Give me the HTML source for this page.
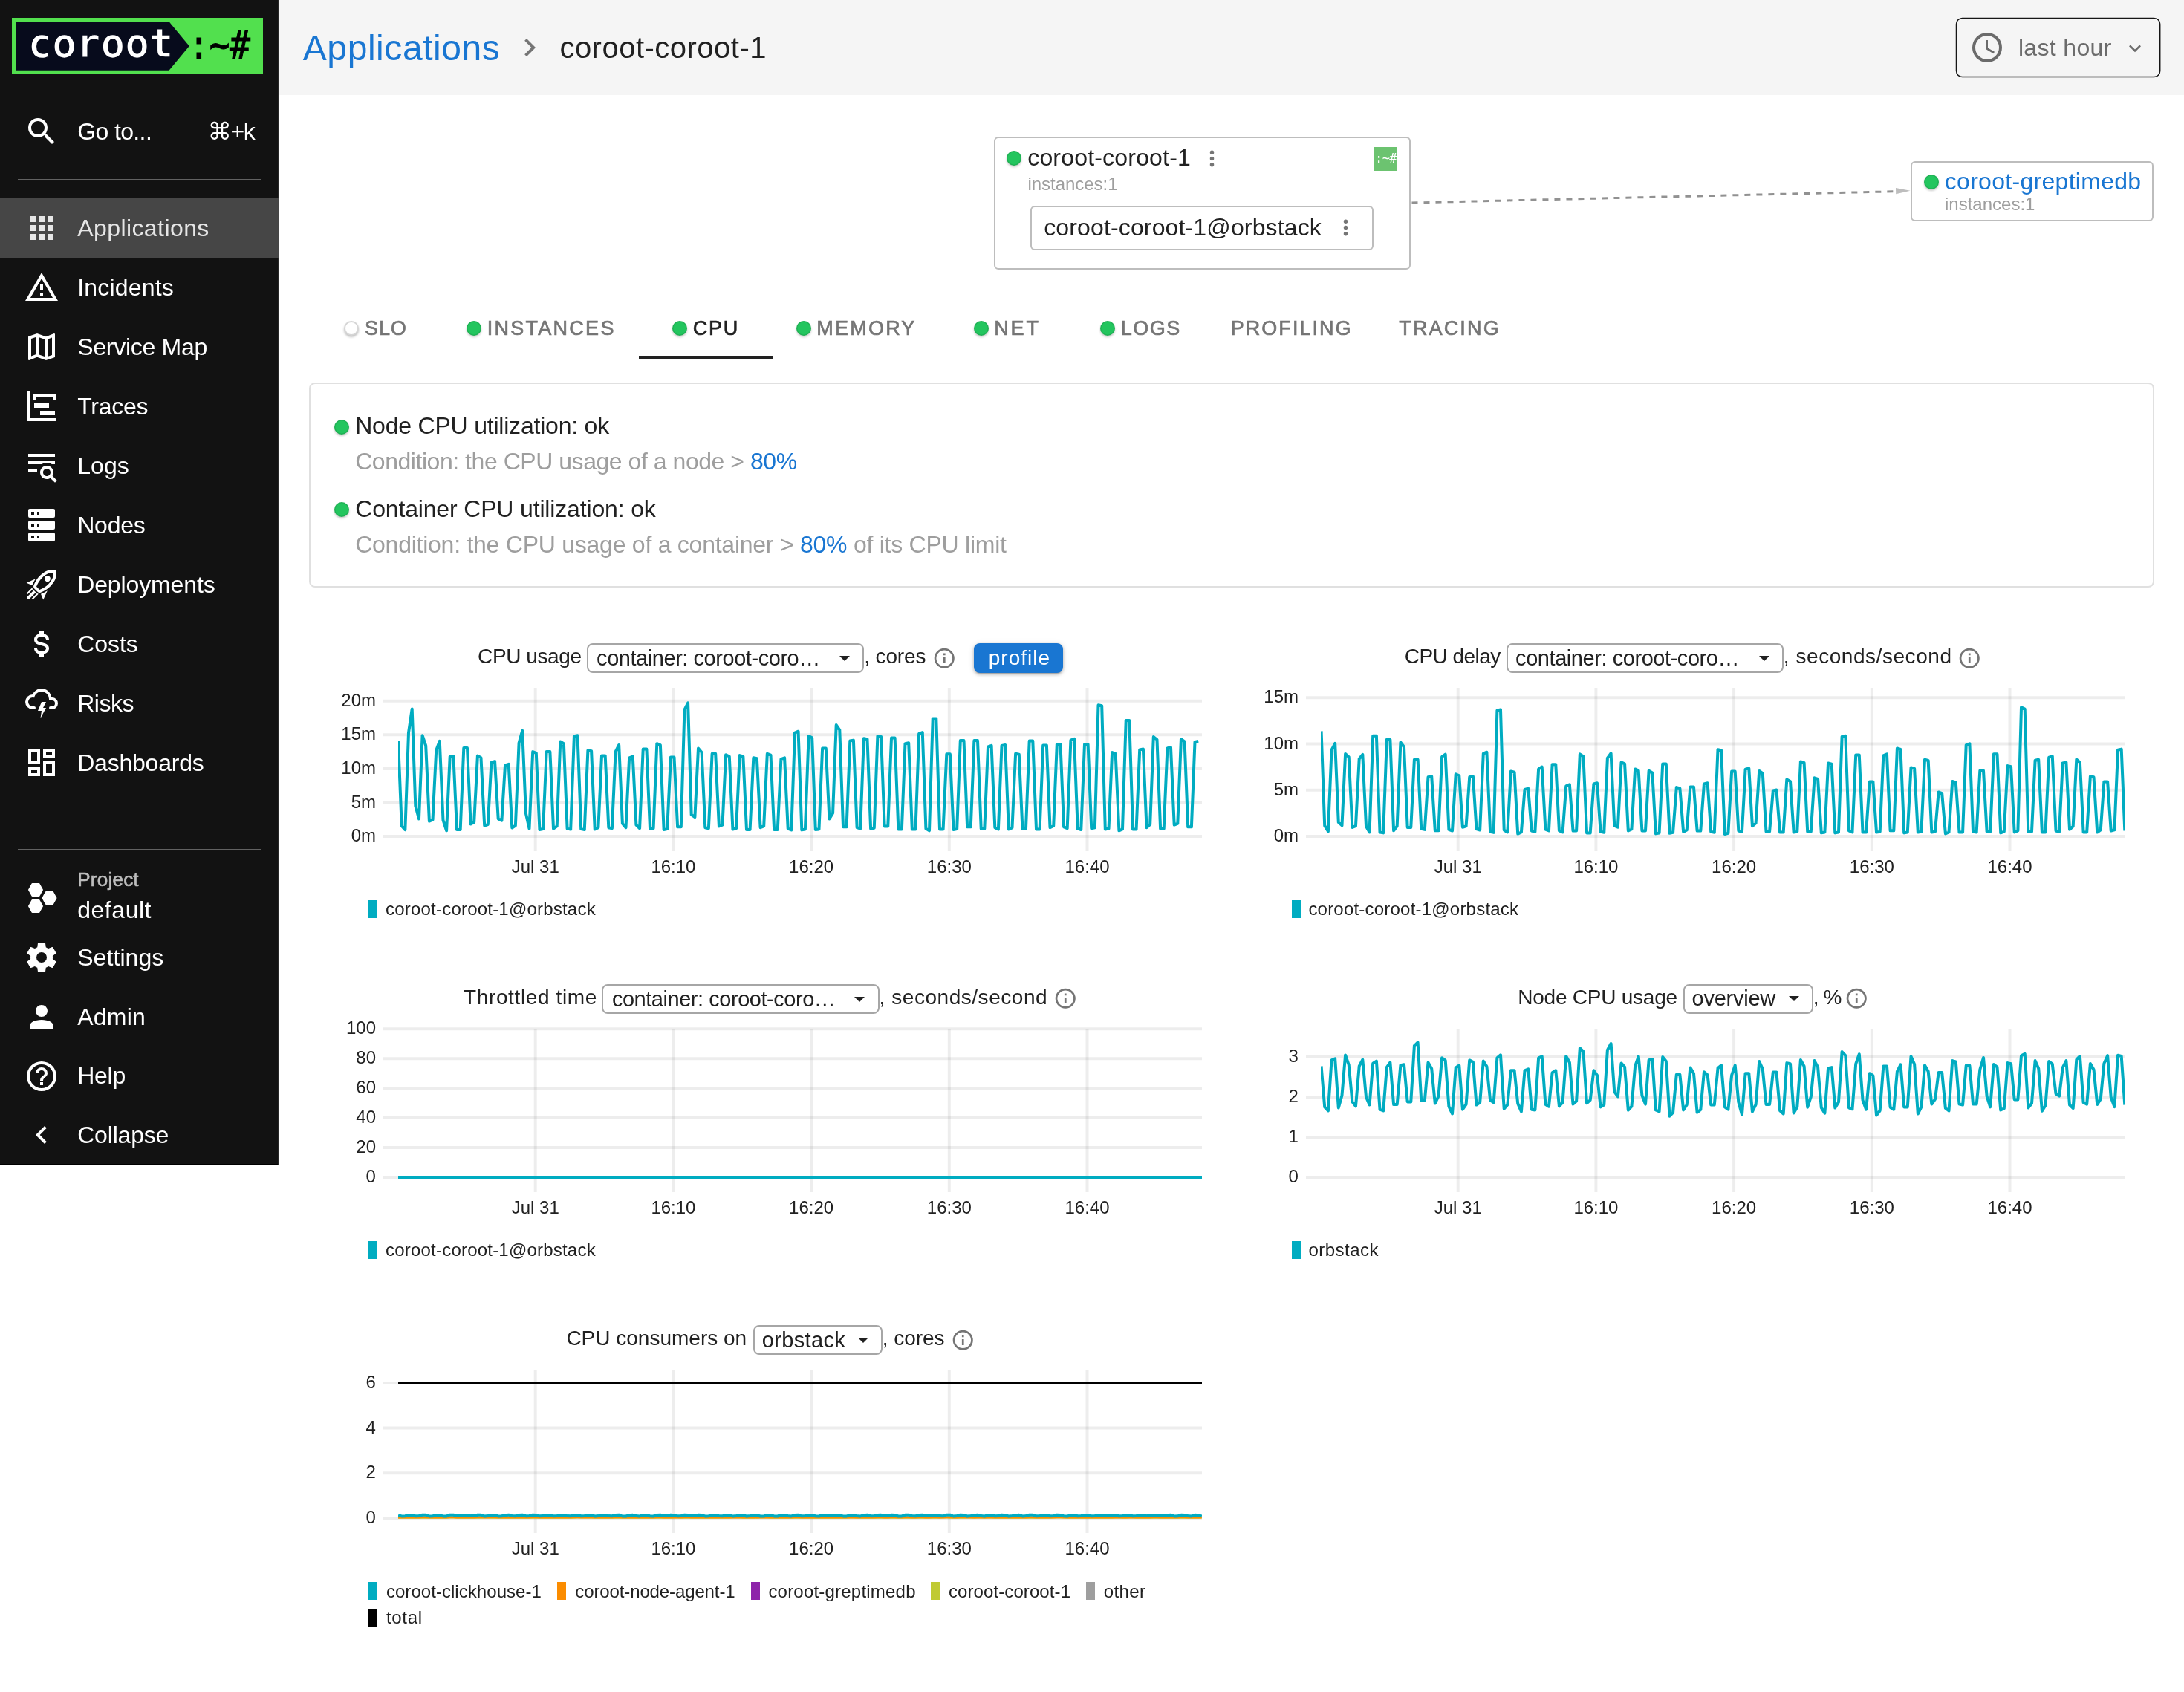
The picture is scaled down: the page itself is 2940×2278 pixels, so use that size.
<!DOCTYPE html>
<html lang="en"><head><meta charset="utf-8"><title>coroot-coroot-1 - CPU</title>
<style>
html,body{margin:0;padding:0}
@media (max-width:1600px){html{zoom:.5}}
body{width:2940px;height:2278px;position:relative;overflow:hidden;background:#fff;font-family:'Liberation Sans','DejaVu Sans',sans-serif;-webkit-font-smoothing:antialiased}
#app{position:absolute;left:0;top:0;width:2940px;height:2278px;will-change:transform}
.t{position:absolute;white-space:pre;line-height:1.2;display:block}
.t a{color:#1976d2}
.ic{position:absolute;display:block}
.plot{position:absolute;display:block;overflow:visible}
nav{position:absolute;left:0;top:0;width:376px;height:1569px;background:#121212;box-sizing:border-box;box-shadow:inset -2px 0 0 #272727,inset 0 -2px 0 #000}
nav .hr{position:absolute;left:24px;width:328px;height:2px;background:rgba(255,255,255,.34)}
nav .active{position:absolute;left:0;top:267px;width:376px;height:80px;background:#464646}
figure{margin:0}
header{position:absolute;left:376px;top:0;width:2564px;height:128px;background:#f5f5f5}
.box{position:absolute;border:2px solid #bdbdbd;border-radius:6px;background:#fff;box-sizing:border-box}
.dot{position:absolute;width:20px;height:20px;border-radius:50%;background:#23c55e;box-shadow:0 2px 3px rgba(0,0,0,.22),inset 0 0 0 1.5px rgba(0,0,0,.1)}
.dot.none{background:#fff;box-shadow:0 2px 3px rgba(0,0,0,.25);border:2px solid #d6d6d6;box-sizing:border-box}
.badge{position:absolute;left:1849px;top:198px;width:32px;height:32px;background:#6cc370}
.tabline{position:absolute;left:860px;top:479px;width:180px;height:4px;background:#212121}
.card{position:absolute;left:416px;top:515px;width:2483.5px;height:276px;border:2px solid #e0e0e0;border-radius:8px;box-sizing:border-box}
.sel{position:absolute;border:2px solid #a6a6a6;border-radius:8px;box-sizing:border-box;background:#fff}
.btn{position:absolute;border-radius:8px;background:#1976d2;box-shadow:0 3px 2px -2px rgba(0,0,0,.2),0 2px 4px 0 rgba(0,0,0,.24),0 1px 8px 0 rgba(0,0,0,.12)}
.lm{position:absolute;width:12px;height:24px;display:block}
</style></head>
<body>
<div id="app">
<nav>
<svg class="ic" style="left:16px;top:24px" width="338" height="76" viewBox="0 0 338 76"><rect width="338" height="76" fill="#52e04e"/><path d="M5,5.3H211.6L238.8,38L211.6,70.7H5Z" fill="#070b1c"/><text x="21.5" y="53.2" font-family="'DejaVu Sans Mono','Liberation Mono',monospace" font-weight="700" font-size="54.5" fill="#fff" stroke="#070b1c" stroke-width="1.6" textLength="196" lengthAdjust="spacingAndGlyphs">coroot</text><text x="238" y="54.5" font-family="'DejaVu Sans Mono','Liberation Mono',monospace" font-size="54" fill="#000" stroke="#000" stroke-width="1.1" textLength="83" lengthAdjust="spacingAndGlyphs">:~#</text></svg>
<div><svg class="ic" style="left:32.0px;top:153.0px" width="48" height="48" viewBox="0 0 24 24" ><path fill="#ffffff" d="M9.5,3A6.5,6.5 0 0,1 16,9.5C16,11.11 15.41,12.59 14.44,13.73L14.71,14H15.5L20.5,19L19,20.5L14,15.5V14.71L13.73,14.44C12.59,15.41 11.11,16 9.5,16A6.5,6.5 0 0,1 3,9.5A6.5,6.5 0 0,1 9.5,3M9.5,5C7,5 5,7 5,9.5C5,12 7,14 9.5,14C12,14 14,12 14,9.5C14,7 12,5 9.5,5Z"/></svg><span class="t" style="left:104.2px;top:157.8px;font-size:32px;color:#ffffff;letter-spacing:-0.62px">Go to...</span><span class="t" style="left:279.8px;top:157.8px;font-size:32px;color:#ffffff;letter-spacing:-1.34px">⌘+k</span></div>
<div class="hr" style="top:241px"></div>
<div class="active"></div>
<a class="cur"><svg class="ic" style="left:32.0px;top:283.0px" width="48" height="48" viewBox="0 0 24 24" ><path fill="#e6e6e6" d="M16,20H20V16H16M16,14H20V10H16M10,8H14V4H10M16,8H20V4H16M10,14H14V10H10M4,14H8V10H4M4,20H8V16H4M10,20H14V16H10M4,8H8V4H4V8Z"/></svg><span class="t" style="left:104.2px;top:287.8px;font-size:32px;color:#e6e6e6;letter-spacing:0.42px">Applications</span></a>
<a><svg class="ic" style="left:32.0px;top:363.0px" width="48" height="48" viewBox="0 0 24 24" ><path fill="#ffffff" d="M12,2L1,21H23M12,6L19.53,19H4.47M11,10V14H13V10M11,16V18H13V16"/></svg><span class="t" style="left:104.2px;top:367.8px;font-size:32px;color:#ffffff;letter-spacing:0.19px">Incidents</span></a>
<a><svg class="ic" style="left:32.0px;top:443.0px" width="48" height="48" viewBox="0 0 24 24" ><path fill="#ffffff" d="M20.5,3L20.34,3.03L15,5.1L9,3L3.36,4.9C3.15,4.97 3,5.15 3,5.38V20.5A0.5,0.5 0 0,0 3.5,21L3.66,20.97L9,18.9L15,21L20.64,19.1C20.85,19.03 21,18.85 21,18.62V3.5A0.5,0.5 0 0,0 20.5,3M10,5.47L14,6.87V18.53L10,17.13V5.47M5,6.46L8,5.45V17.15L5,18.31V6.46M19,17.54L16,18.55V6.86L19,5.7V17.54Z"/></svg><span class="t" style="left:104.2px;top:447.8px;font-size:32px;color:#ffffff;letter-spacing:-0.27px">Service Map</span></a>
<a><svg class="ic" style="left:32.0px;top:523.0px" width="48" height="48" viewBox="0 0 24 24" ><path fill="#ffffff" d="M2,2H4V20H22V22H2V2M7,10H17V13H7V10M11,15H21V18H11V15M6,4H22V8H20V6H8V8H6V4Z"/></svg><span class="t" style="left:104.2px;top:527.8px;font-size:32px;color:#ffffff;letter-spacing:-0.28px">Traces</span></a>
<a><svg class="ic" style="left:32.0px;top:603.0px" width="48" height="48" viewBox="0 0 24 24" ><path fill="#ffffff" d="M19.31 18.9L22.39 22L21 23.39L17.88 20.32C17.19 20.75 16.37 21 15.5 21C13 21 11 19 11 16.5C11 14 13 12 15.5 12C18 12 20 14 20 16.5C20 17.38 19.75 18.21 19.31 18.9M15.5 19C16.88 19 18 17.88 18 16.5C18 15.12 16.88 14 15.5 14C14.12 14 13 15.12 13 16.5C13 17.88 14.12 19 15.5 19M21 4V6H3V4H21M3 16V14H9V16H3M3 11V9H21V11H18.97C17.96 10.37 16.77 10 15.5 10C14.23 10 13.04 10.37 12.03 11H3Z"/></svg><span class="t" style="left:104.2px;top:607.8px;font-size:32px;color:#ffffff;letter-spacing:0.07px">Logs</span></a>
<a><svg class="ic" style="left:32.0px;top:683.0px" width="48" height="48" viewBox="0 0 24 24" ><path fill="#ffffff" d="M4,1H20A1,1 0 0,1 21,2V6A1,1 0 0,1 20,7H4A1,1 0 0,1 3,6V2A1,1 0 0,1 4,1M4,9H20A1,1 0 0,1 21,10V14A1,1 0 0,1 20,15H4A1,1 0 0,1 3,14V10A1,1 0 0,1 4,9M4,17H20A1,1 0 0,1 21,18V22A1,1 0 0,1 20,23H4A1,1 0 0,1 3,22V18A1,1 0 0,1 4,17M9,5H10V3H9V5M9,13H10V11H9V13M9,21H10V19H9V21M5,3V5H7V3H5M5,11V13H7V11H5M5,19V21H7V19H5Z"/></svg><span class="t" style="left:104.2px;top:687.8px;font-size:32px;color:#ffffff;letter-spacing:-0.23px">Nodes</span></a>
<a><svg class="ic" style="left:32.0px;top:763.0px" width="48" height="48" viewBox="0 0 24 24" ><path fill="#ffffff" d="M13.13 22.19L11.5 18.36C13.07 17.78 14.54 17 15.9 16.09L13.13 22.19M5.64 12.5L1.81 10.87L7.91 8.1C7 9.46 6.22 10.93 5.64 12.5M19.22 4C19.5 4 19.75 4 19.96 4.05C20.13 5.44 19.94 8.3 16.66 11.58C14.96 13.29 12.93 14.6 10.65 15.47L8.5 13.37C9.42 11.06 10.73 9.03 12.42 7.34C15.18 4.58 17.64 4 19.22 4M19.22 2C17.24 2 14.24 2.69 11 5.93C8.81 8.12 7.5 10.53 6.65 12.64C6.37 13.39 6.56 14.21 7.11 14.77L9.24 16.89C9.62 17.27 10.13 17.5 10.66 17.5C10.89 17.5 11.13 17.44 11.36 17.35C13.5 16.53 15.88 15.19 18.07 13C23.73 7.34 21.61 2.39 21.61 2.39S20.7 2 19.22 2M14.54 9.46C13.76 8.68 13.76 7.41 14.54 6.63S16.59 5.85 17.37 6.63C18.14 7.41 18.15 8.68 17.37 9.46C16.59 10.24 15.32 10.24 14.54 9.46M8.88 16.53L7.47 15.12L8.88 16.53M6.24 22L9.88 18.36C9.54 18.27 9.21 18.12 8.91 17.91L4.83 22H6.24M2 22H3.41L8.18 17.24L6.76 15.83L2 20.59V22M2 19.17L6.09 15.09C5.88 14.79 5.73 14.47 5.64 14.12L2 17.76V19.17Z"/></svg><span class="t" style="left:104.2px;top:767.8px;font-size:32px;color:#ffffff;letter-spacing:-0.12px">Deployments</span></a>
<a><svg class="ic" style="left:32.0px;top:843.0px" width="48" height="48" viewBox="0 0 24 24" ><path fill="#ffffff" d="M7,15H9C9,16.08 10.37,17 12,17C13.63,17 15,16.08 15,15C15,13.9 13.96,13.5 11.76,12.97C9.64,12.44 7,11.78 7,9C7,7.21 8.47,5.69 10.5,5.18V3H13.5V5.18C15.53,5.69 17,7.21 17,9H15C15,7.92 13.63,7 12,7C10.37,7 9,7.92 9,9C9,10.1 10.04,10.5 12.24,11.03C14.36,11.56 17,12.22 17,15C17,16.79 15.53,18.31 13.5,18.82V21H10.5V18.82C8.47,18.31 7,16.79 7,15Z"/></svg><span class="t" style="left:104.2px;top:847.8px;font-size:32px;color:#ffffff;letter-spacing:-0.05px">Costs</span></a>
<a><svg class="ic" style="left:32.0px;top:923.0px" width="48" height="48" viewBox="0 0 24 24" ><path fill="#ffffff" d="M6,16A5,5 0 0,1 1,11A5,5 0 0,1 6,6C7,3.65 9.3,2 12,2C15.43,2 18.24,4.66 18.5,8.03L19,8A4,4 0 0,1 23,12A4,4 0 0,1 19,16H18A1,1 0 0,1 17,15A1,1 0 0,1 18,14H19A2,2 0 0,0 21,12A2,2 0 0,0 19,10H17V9A5,5 0 0,0 12,4C9.5,4 7.45,5.82 7.06,8.19C6.73,8.07 6.37,8 6,8A3,3 0 0,0 3,11A3,3 0 0,0 6,14H7A1,1 0 0,1 8,15A1,1 0 0,1 7,16H6M12,11H15L13,15H15L11.25,22L12,17H9.5L12,11Z"/></svg><span class="t" style="left:104.2px;top:927.8px;font-size:32px;color:#ffffff;letter-spacing:-0.45px">Risks</span></a>
<a><svg class="ic" style="left:32.0px;top:1003.0px" width="48" height="48" viewBox="0 0 24 24" ><path fill="#ffffff" d="M19,5V7H15V5H19M9,5V11H5V5H9M19,13V19H15V13H19M9,17V19H5V17H9M21,3H13V9H21V3M11,3H3V13H11V3M21,11H13V21H21V11M11,15H3V21H11V15Z"/></svg><span class="t" style="left:104.2px;top:1007.8px;font-size:32px;color:#ffffff;letter-spacing:-0.22px">Dashboards</span></a>
<div class="hr" style="top:1143px"></div>
<a><svg class="ic" style="left:32.0px;top:1184.7px" width="48" height="48" viewBox="0 0 24 24" ><path fill="#ffffff" d="M10.25,2C10.44,2 10.61,2.11 10.69,2.26L12.91,6.22L13,6.5L12.91,6.78L10.69,10.74C10.61,10.89 10.44,11 10.25,11H5.75C5.56,11 5.39,10.89 5.31,10.74L3.09,6.78L3,6.5L3.09,6.22L5.31,2.26C5.39,2.11 5.56,2 5.75,2H10.25M10.25,13C10.44,13 10.61,13.11 10.69,13.26L12.91,17.22L13,17.5L12.91,17.78L10.69,21.74C10.61,21.89 10.44,22 10.25,22H5.75C5.56,22 5.39,21.89 5.31,21.74L3.09,17.78L3,17.5L3.09,17.22L5.31,13.26C5.39,13.11 5.56,13 5.75,13H10.25M19.5,7.5C19.69,7.5 19.86,7.61 19.94,7.76L22.16,11.72L22.25,12L22.16,12.28L19.94,16.24C19.86,16.39 19.69,16.5 19.5,16.5H15C14.81,16.5 14.64,16.39 14.56,16.24L12.34,12.28L12.25,12L12.34,11.72L14.56,7.76C14.64,7.61 14.81,7.5 15,7.5H19.5Z"/></svg><span class="t" style="left:104.3px;top:1169.4px;font-size:26px;color:#bdbdbd;letter-spacing:0.23px;-webkit-text-stroke:0.6px currentColor">Project</span><span class="t" style="left:104.2px;top:1206.3px;font-size:32px;color:#ffffff;letter-spacing:0.54px">default</span></a>
<a><svg class="ic" style="left:32.0px;top:1265.0px" width="48" height="48" viewBox="0 0 24 24" ><path fill="#ffffff" d="M12,15.5A3.5,3.5 0 0,1 8.5,12A3.5,3.5 0 0,1 12,8.5A3.5,3.5 0 0,1 15.5,12A3.5,3.5 0 0,1 12,15.5M19.43,12.97C19.47,12.65 19.5,12.33 19.5,12C19.5,11.67 19.47,11.34 19.43,11L21.54,9.37C21.73,9.22 21.78,8.95 21.66,8.73L19.66,5.27C19.54,5.05 19.27,4.96 19.05,5.05L16.56,6.05C16.04,5.66 15.5,5.32 14.87,5.07L14.5,2.42C14.46,2.18 14.25,2 14,2H10C9.75,2 9.54,2.18 9.5,2.42L9.13,5.07C8.5,5.32 7.96,5.66 7.44,6.05L4.95,5.05C4.73,4.96 4.46,5.05 4.34,5.27L2.34,8.73C2.21,8.95 2.27,9.22 2.46,9.37L4.57,11C4.53,11.34 4.5,11.67 4.5,12C4.5,12.33 4.53,12.65 4.57,12.97L2.46,14.63C2.27,14.78 2.21,15.05 2.34,15.27L4.34,18.73C4.46,18.95 4.73,19.03 4.95,18.95L7.44,17.94C7.96,18.34 8.5,18.68 9.13,18.93L9.5,21.58C9.54,21.82 9.75,22 10,22H14C14.25,22 14.46,21.82 14.5,21.58L14.87,18.93C15.5,18.67 16.04,18.34 16.56,17.94L19.05,18.95C19.27,19.03 19.54,18.95 19.66,18.73L21.66,15.27C21.78,15.05 21.73,14.78 21.54,14.63L19.43,12.97Z"/></svg><span class="t" style="left:104.2px;top:1269.8px;font-size:32px;color:#ffffff;letter-spacing:0.07px">Settings</span></a>
<a><svg class="ic" style="left:32.0px;top:1345.0px" width="48" height="48" viewBox="0 0 24 24" ><path fill="#ffffff" d="M12,4A4,4 0 0,1 16,8A4,4 0 0,1 12,12A4,4 0 0,1 8,8A4,4 0 0,1 12,4M12,14C16.42,14 20,15.79 20,18V20H4V18C4,15.79 7.58,14 12,14Z"/></svg><span class="t" style="left:104.2px;top:1349.8px;font-size:32px;color:#ffffff;letter-spacing:0.22px">Admin</span></a>
<a><svg class="ic" style="left:32.0px;top:1424.6px" width="48" height="48" viewBox="0 0 24 24" ><path fill="#ffffff" d="M11,18H13V16H11V18M12,2A10,10 0 0,0 2,12A10,10 0 0,0 12,22A10,10 0 0,0 22,12A10,10 0 0,0 12,2M12,20C7.59,20 4,16.41 4,12C4,7.59 7.59,4 12,4C16.41,4 20,7.59 20,12C20,16.41 16.41,20 12,20M12,6A4,4 0 0,0 8,10H10A2,2 0 0,1 12,8A2,2 0 0,1 14,10C14,12 11,11.75 11,15H13C13,12.75 16,12.5 16,10A4,4 0 0,0 12,6Z"/></svg><span class="t" style="left:104.2px;top:1429.4px;font-size:32px;color:#ffffff;letter-spacing:-0.27px">Help</span></a>
<a><svg class="ic" style="left:32.0px;top:1504.0px" width="48" height="48" viewBox="0 0 24 24" ><path fill="#ffffff" d="M15.41,16.58L10.83,12L15.41,7.41L14,6L8,12L14,18L15.41,16.58Z"/></svg><span class="t" style="left:104.2px;top:1508.8px;font-size:32px;color:#ffffff;letter-spacing:-0.19px">Collapse</span></a>
</nav>
<header></header>
<div class="crumbs">
<span class="t" style="left:407.8px;top:35.7px;font-size:48px;color:#1976d2;letter-spacing:0.56px">Applications</span><svg class="ic" style="left:689.0px;top:40.0px" width="48" height="48" viewBox="0 0 24 24" ><path fill="#757575" d="M8.59,16.58L13.17,12L8.59,7.41L10,6L16,12L10,18L8.59,16.58Z"/></svg><span class="t" style="left:753.4px;top:40.0px;font-size:40px;color:#212121;letter-spacing:0.49px">coroot-coroot-1</span>
</div>
<div class="range">
<svg class="ic" style="left:2630px;top:20px" width="282" height="88" viewBox="2630 20 282 88"><rect x="2633.5" y="24.4" width="274.2" height="79.2" rx="8" fill="none" stroke="#161616" stroke-width="1.5"/></svg>
<svg class="ic" style="left:2650.8px;top:40.0px" width="48" height="48" viewBox="0 0 24 24" ><path fill="#6b6b6b" d="M12,20A8,8 0 0,0 20,12A8,8 0 0,0 12,4A8,8 0 0,0 4,12A8,8 0 0,0 12,20M12,2A10,10 0 0,1 22,12A10,10 0 0,1 12,22C6.47,22 2,17.5 2,12A10,10 0 0,1 12,2M12.5,7V12.25L17,14.92L16.25,16.15L11,13V7H12.5Z"/></svg><span class="t" style="left:2716.9px;top:44.8px;font-size:32px;color:#6b6b6b;letter-spacing:0.35px">last hour</span><svg class="ic" style="left:2858.0px;top:48.5px" width="32" height="32" viewBox="0 0 24 24" ><path fill="#6b6b6b" d="M7.41,8.58L12,13.17L16.59,8.58L18,10L12,16L6,10L7.41,8.58Z"/></svg>
</div>
<main>
<section class="appmap">
<div class="box" style="left:1337.5px;top:184.4px;width:561.7px;height:178.2px"></div>
<div class="box" style="left:1387px;top:277px;width:462px;height:60px"></div>
<div class="box" style="left:2572px;top:217px;width:327.4px;height:81px"></div>
<div class="badge"></div>
<i class="dot" style="left:1354.6px;top:203px"></i>
<i class="dot" style="left:2590px;top:234.8px"></i>
<svg class="ic" style="left:1890px;top:240px" width="700" height="50" viewBox="1890 240 700 50"><line x1="1900.5" y1="273" x2="2570" y2="257.3" stroke="#919191" stroke-width="3" stroke-dasharray="8 8"/><path d="M2571.5,256.8L2552,253L2552.2,261.2Z" fill="#bdbdbd"/></svg>
<svg class="ic" style="left:1615.4px;top:197.3px" width="33" height="33" viewBox="0 0 24 24" ><path fill="#757575" d="M12,16A2,2 0 0,1 14,18A2,2 0 0,1 12,20A2,2 0 0,1 10,18A2,2 0 0,1 12,16M12,10A2,2 0 0,1 14,12A2,2 0 0,1 12,14A2,2 0 0,1 10,12A2,2 0 0,1 12,10M12,4A2,2 0 0,1 14,6A2,2 0 0,1 12,8A2,2 0 0,1 10,6A2,2 0 0,1 12,4Z"/></svg><svg class="ic" style="left:1794.6px;top:290.2px" width="33" height="33" viewBox="0 0 24 24" ><path fill="#757575" d="M12,16A2,2 0 0,1 14,18A2,2 0 0,1 12,20A2,2 0 0,1 10,18A2,2 0 0,1 12,16M12,10A2,2 0 0,1 14,12A2,2 0 0,1 12,14A2,2 0 0,1 10,12A2,2 0 0,1 12,10M12,4A2,2 0 0,1 14,6A2,2 0 0,1 12,8A2,2 0 0,1 10,6A2,2 0 0,1 12,4Z"/></svg>
<span class="t" style="left:1383.2px;top:193.3px;font-size:32px;color:#212121;letter-spacing:0.19px">coroot-coroot-1</span>
<span class="t" style="left:1383.4px;top:233.6px;font-size:24px;color:#9e9e9e;letter-spacing:-0.02px">instances:1</span>
<span class="t" style="left:1405.2px;top:286.8px;font-size:32px;color:#212121;letter-spacing:0.14px">coroot-coroot-1@orbstack</span>
<span class="t" style="left:2617.8px;top:224.8px;font-size:32px;color:#1976d2;letter-spacing:0.29px">coroot-greptimedb</span>
<span class="t" style="left:2618.0px;top:260.6px;font-size:24px;color:#9e9e9e">instances:1</span>
<span class="t" style="left:1851.1px;top:203.3px;font-size:17px;color:#ffffff;letter-spacing:-0.68px;font-family:'DejaVu Sans Mono','Liberation Mono',monospace">:~#</span>
</section>
<section class="tabs">
<a><i class="dot none" style="left:462.7px;top:432px"></i><span class="t" style="left:491.1px;top:426.0px;font-size:27px;color:#757575;letter-spacing:0.86px;-webkit-text-stroke:0.7px currentColor">SLO</span></a>
<a><i class="dot" style="left:627.9px;top:432px"></i><span class="t" style="left:655.8px;top:426.0px;font-size:27px;color:#757575;letter-spacing:2.26px;-webkit-text-stroke:0.7px currentColor">INSTANCES</span></a>
<a class="cur"><i class="dot" style="left:904.9px;top:432px"></i><span class="t" style="left:932.8px;top:426.0px;font-size:27px;color:#212121;letter-spacing:1.67px;-webkit-text-stroke:0.7px currentColor">CPU</span></a>
<a><i class="dot" style="left:1071.6px;top:432px"></i><span class="t" style="left:1099.3px;top:426.0px;font-size:27px;color:#757575;letter-spacing:2.21px;-webkit-text-stroke:0.7px currentColor">MEMORY</span></a>
<a><i class="dot" style="left:1311.0px;top:432px"></i><span class="t" style="left:1338.3px;top:426.0px;font-size:27px;color:#757575;letter-spacing:2.82px;-webkit-text-stroke:0.7px currentColor">NET</span></a>
<a><i class="dot" style="left:1480.7px;top:432px"></i><span class="t" style="left:1508.8px;top:426.0px;font-size:27px;color:#757575;letter-spacing:1.47px;-webkit-text-stroke:0.7px currentColor">LOGS</span></a>
<a><span class="t" style="left:1656.7px;top:426.0px;font-size:27px;color:#757575;letter-spacing:2.05px;-webkit-text-stroke:0.7px currentColor">PROFILING</span></a>
<a><span class="t" style="left:1883.3px;top:426.0px;font-size:27px;color:#757575;letter-spacing:2.14px;-webkit-text-stroke:0.7px currentColor">TRACING</span></a>
<div class="tabline"></div>
</section>
<section class="checks">
<div class="card"></div>
<i class="dot" style="left:450px;top:564.5px"></i>
<span class="t" style="left:478.2px;top:553.8px;font-size:32px;color:#212121;letter-spacing:-0.21px">Node CPU utilization: ok</span>
<span class="t" style="left:478.2px;top:601.8px;font-size:32px;color:#9e9e9e;letter-spacing:-0.46px">Condition: the CPU usage of a node &gt; <a>80%</a></span>
<i class="dot" style="left:450px;top:676.4px"></i>
<span class="t" style="left:478.2px;top:665.8px;font-size:32px;color:#212121;letter-spacing:-0.16px">Container CPU utilization: ok</span>
<span class="t" style="left:478.2px;top:713.5px;font-size:32px;color:#9e9e9e;letter-spacing:-0.25px">Condition: the CPU usage of a container &gt; <a>80%</a> of its CPU limit</span>
</section>
<section class="charts">
<figure>
<svg class="plot" style="left:516px;top:922px" width="1102" height="230" viewBox="0 0 1102 230"><g stroke="#000" stroke-opacity=".07" stroke-width="4"><line x1="0" x2="1102" y1="204.1" y2="204.1"/><line x1="0" x2="1102" y1="158.5" y2="158.5"/><line x1="0" x2="1102" y1="112.9" y2="112.9"/><line x1="0" x2="1102" y1="67.3" y2="67.3"/><line x1="0" x2="1102" y1="21.7" y2="21.7"/><line x1="204.7" x2="204.7" y1="4" y2="224"/><line x1="390.4" x2="390.4" y1="4" y2="224"/><line x1="576.1" x2="576.1" y1="4" y2="224"/><line x1="761.8" x2="761.8" y1="4" y2="224"/><line x1="947.5" x2="947.5" y1="4" y2="224"/></g><svg x="20" y="0" width="1082" height="230" viewBox="536 922 1082 230"><polyline points="536.1,997.9 540.7,1112.0 545.4,1117.2 550.0,986.6 554.7,954.6 559.3,1085.1 564.0,1102.4 568.6,990.2 573.2,1003.9 577.9,1105.6 582.5,1103.7 587.2,1010.3 591.8,997.9 596.5,1104.2 601.1,1118.3 605.7,1018.5 610.4,1018.5 615.0,1117.0 619.7,1117.0 624.3,1007.1 629.0,1007.1 633.6,1109.4 638.2,1106.9 642.9,1017.6 647.5,1020.3 652.2,1111.5 656.8,1110.0 661.4,1026.7 666.1,1025.1 670.7,1102.4 675.4,1104.6 680.0,1030.3 684.7,1028.9 689.3,1114.5 693.9,1111.5 698.6,1000.2 703.2,983.8 707.9,1095.1 712.5,1115.6 717.2,1012.1 721.8,1013.9 726.4,1117.0 731.1,1116.1 735.7,1012.1 740.4,1012.1 745.0,1115.6 749.7,1112.4 754.3,998.4 758.9,1001.2 763.6,1115.6 768.2,1116.5 772.9,991.1 777.5,990.2 782.2,1116.1 786.8,1117.0 791.4,1010.3 796.1,1011.2 800.7,1116.5 805.4,1114.2 810.0,1017.6 814.7,1017.6 819.3,1114.2 823.9,1115.2 828.6,1012.1 833.2,1003.0 837.9,1108.8 842.5,1114.2 847.1,1020.3 851.8,1018.5 856.4,1110.6 861.1,1115.2 865.7,1008.5 870.4,1008.5 875.0,1116.1 879.6,1115.2 884.3,1001.2 888.9,1003.0 893.6,1117.0 898.2,1116.1 902.9,1019.4 907.5,1019.4 912.1,1113.3 916.8,1113.3 921.4,955.6 926.1,946.4 930.7,1096.9 935.4,1100.1 940.0,1007.5 944.6,1013.0 949.3,1114.2 953.9,1115.2 958.6,1014.8 963.2,1014.8 967.9,1112.4 972.5,1110.6 977.1,1016.2 981.8,1018.5 986.4,1116.5 991.1,1115.2 995.7,1017.1 1000.4,1018.5 1005.0,1117.0 1009.6,1117.0 1014.3,1020.3 1018.9,1021.2 1023.6,1114.2 1028.2,1112.4 1032.8,1014.8 1037.5,1016.7 1042.1,1117.0 1046.8,1117.0 1051.4,1022.1 1056.1,1020.3 1060.7,1115.6 1065.3,1117.4 1070.0,986.6 1074.6,984.7 1079.3,1117.4 1083.9,1116.5 1088.6,991.1 1093.2,993.4 1097.8,1117.0 1102.5,1116.5 1107.1,1007.5 1111.8,1007.5 1116.4,1102.4 1121.1,1094.6 1125.7,976.1 1130.3,982.9 1135.0,1113.3 1139.6,1113.3 1144.3,997.5 1148.9,996.6 1153.6,1114.2 1158.2,1115.6 1162.8,994.3 1167.5,995.2 1172.1,1115.6 1176.8,1114.7 1181.4,991.1 1186.1,992.0 1190.7,1112.4 1195.3,1112.4 1200.0,993.4 1204.6,993.4 1209.3,1116.5 1213.9,1116.5 1218.5,1001.2 1223.2,1000.2 1227.8,1116.5 1232.5,1116.5 1237.1,987.9 1241.8,986.1 1246.4,1115.6 1251.0,1118.3 1255.7,967.4 1260.3,967.4 1265.0,1116.5 1269.6,1116.5 1274.3,1015.3 1278.9,1015.3 1283.5,1117.0 1288.2,1116.1 1292.8,997.1 1297.5,997.1 1302.1,1113.3 1306.8,1113.3 1311.4,997.1 1316.0,997.1 1320.7,1115.6 1325.3,1115.6 1330.0,1005.3 1334.6,1003.9 1339.3,1114.2 1343.9,1116.5 1348.5,1003.9 1353.2,1003.0 1357.8,1116.5 1362.5,1114.5 1367.1,1014.8 1371.8,1015.7 1376.4,1115.6 1381.0,1115.6 1385.7,997.5 1390.3,997.5 1395.0,1116.5 1399.6,1116.5 1404.2,1003.4 1408.9,1003.4 1413.5,1114.2 1418.2,1112.0 1422.8,1002.1 1427.5,1002.1 1432.1,1113.3 1436.7,1115.2 1441.4,996.6 1446.0,994.8 1450.7,1115.6 1455.3,1117.0 1460.0,1002.1 1464.6,1002.1 1469.2,1115.2 1473.9,1114.2 1478.5,949.2 1483.2,950.1 1487.8,1116.5 1492.5,1115.6 1497.1,1013.0 1501.7,1014.8 1506.4,1118.3 1511.0,1116.5 1515.7,970.1 1520.3,970.1 1525.0,1116.5 1529.6,1116.5 1534.2,1009.4 1538.9,1008.5 1543.5,1114.2 1548.2,1110.1 1552.8,992.0 1557.5,995.7 1562.1,1115.6 1566.7,1115.6 1571.4,1007.5 1576.0,1006.2 1580.7,1110.6 1585.3,1108.8 1589.9,995.2 1594.6,998.4 1599.2,1113.3 1603.9,1113.3 1608.5,998.9 1613.2,997.9" fill="none" stroke="#00acc1" stroke-width="4" stroke-linejoin="round"/></svg></svg>
<div class="sel" style="left:789.8px;top:866.0px;width:373.5px;height:40.4px"></div>
<svg class="ic" style="left:1129.5px;top:882.7px" width="14" height="7" viewBox="0 0 14 7"><path d="M0,0H14L7,7Z" fill="#212121"/></svg>
<svg class="ic" style="left:1254.8px;top:869.5px" width="32.5" height="32.5" viewBox="0 0 24 24" ><path fill="#757575" d="M11,9H13V7H11M12,20C7.59,20 4,16.41 4,12C4,7.59 7.59,4 12,4C16.41,4 20,7.59 20,12C20,16.41 16.41,20 12,20M12,2A10,10 0 0,0 2,12A10,10 0 0,0 12,22A10,10 0 0,0 22,12A10,10 0 0,0 12,2M11,17H13V11H11V17Z"/></svg>
<div class="btn" style="left:1311.0px;top:866.0px;width:119.8px;height:40.2px"></div>
<i class="lm" style="left:496.0px;top:1211.6px;background:#00acc1"></i>
<span class="t" style="left:472.7px;top:1111.2px;font-size:24px;color:#212121">0m</span>
<span class="t" style="left:472.7px;top:1065.6px;font-size:24px;color:#212121">5m</span>
<span class="t" style="left:459.3px;top:1020.0px;font-size:24px;color:#212121">10m</span>
<span class="t" style="left:459.3px;top:974.4px;font-size:24px;color:#212121">15m</span>
<span class="t" style="left:459.3px;top:928.8px;font-size:24px;color:#212121">20m</span>
<span class="t" style="left:688.7px;top:1153.1px;font-size:24px;color:#212121">Jul 31</span>
<span class="t" style="left:876.4px;top:1153.1px;font-size:24px;color:#212121">16:10</span>
<span class="t" style="left:1062.1px;top:1153.1px;font-size:24px;color:#212121">16:20</span>
<span class="t" style="left:1247.8px;top:1153.1px;font-size:24px;color:#212121">16:30</span>
<span class="t" style="left:1433.5px;top:1153.1px;font-size:24px;color:#212121">16:40</span>
<span class="t" style="left:643.1px;top:867.2px;font-size:28px;color:#212121;letter-spacing:-0.41px">CPU usage</span>
<span class="t" style="left:803.1px;top:868.8px;font-size:29px;color:#212121;letter-spacing:-0.45px">container: coroot-coro…</span>
<span class="t" style="left:1163.3px;top:867.2px;font-size:28px;color:#212121;letter-spacing:-0.14px">, cores</span>
<span class="t" style="left:1330.8px;top:869.3px;font-size:28px;color:#fff;letter-spacing:0.99px">profile</span>
<span class="t" style="left:519.0px;top:1210.2px;font-size:24px;color:#212121;letter-spacing:0.21px">coroot-coroot-1@orbstack</span>
</figure>
<figure>
<svg class="plot" style="left:1758px;top:922px" width="1102" height="230" viewBox="0 0 1102 230"><g stroke="#000" stroke-opacity=".07" stroke-width="4"><line x1="0" x2="1102" y1="204.0" y2="204.0"/><line x1="0" x2="1102" y1="141.8" y2="141.8"/><line x1="0" x2="1102" y1="79.5" y2="79.5"/><line x1="0" x2="1102" y1="17.2" y2="17.2"/><line x1="204.7" x2="204.7" y1="4" y2="224"/><line x1="390.4" x2="390.4" y1="4" y2="224"/><line x1="576.1" x2="576.1" y1="4" y2="224"/><line x1="761.8" x2="761.8" y1="4" y2="224"/><line x1="947.5" x2="947.5" y1="4" y2="224"/></g><svg x="20" y="0" width="1082" height="230" viewBox="1778 922 1082 230"><polyline points="1778.6,984.4 1783.2,1111.6 1787.9,1119.3 1792.5,1009.8 1797.2,1000.9 1801.8,1107.1 1806.5,1111.3 1811.1,1014.9 1815.7,1019.2 1820.4,1114.0 1825.0,1112.2 1829.7,1021.7 1834.3,1015.9 1839.0,1112.4 1843.6,1120.5 1848.2,990.7 1852.9,990.7 1857.5,1120.5 1862.2,1121.4 1866.8,995.8 1871.4,995.8 1876.1,1118.3 1880.7,1112.2 1885.4,999.6 1890.0,1005.4 1894.7,1114.0 1899.3,1114.0 1903.9,1022.7 1908.6,1022.7 1913.2,1115.7 1917.9,1116.9 1922.5,1046.3 1927.2,1045.2 1931.8,1118.3 1936.4,1118.3 1941.1,1018.8 1945.7,1015.6 1950.4,1116.9 1955.0,1118.5 1959.7,1042.2 1964.3,1044.3 1968.9,1113.7 1973.6,1112.4 1978.2,1046.3 1982.9,1045.2 1987.5,1116.0 1992.2,1117.5 1996.8,1014.6 2001.4,1012.7 2006.1,1119.9 2010.7,1120.9 2015.4,956.4 2020.0,955.4 2024.7,1117.5 2029.3,1120.5 2033.9,1038.4 2038.6,1039.6 2043.2,1122.6 2047.9,1120.5 2052.5,1062.9 2057.2,1061.6 2061.8,1118.5 2066.4,1119.9 2071.1,1035.4 2075.7,1032.5 2080.4,1116.7 2085.0,1118.5 2089.6,1029.3 2094.3,1029.3 2098.9,1118.5 2103.6,1120.5 2108.2,1058.4 2112.9,1056.3 2117.5,1118.5 2122.1,1118.5 2126.8,1015.3 2131.4,1018.4 2136.1,1121.5 2140.7,1121.5 2145.4,1055.5 2150.0,1054.2 2154.6,1119.9 2159.3,1120.8 2163.9,1020.7 2168.6,1014.3 2173.2,1111.6 2177.9,1113.7 2182.5,1026.4 2187.1,1028.4 2191.8,1118.5 2196.4,1116.4 2201.1,1035.4 2205.7,1037.6 2210.4,1118.5 2215.0,1118.5 2219.6,1037.6 2224.3,1040.5 2228.9,1122.4 2233.6,1121.5 2238.2,1028.4 2242.8,1028.4 2247.5,1121.8 2252.1,1120.8 2256.8,1060.1 2261.4,1061.4 2266.1,1119.9 2270.7,1117.5 2275.3,1059.4 2280.0,1059.4 2284.6,1118.5 2289.3,1118.5 2293.9,1055.5 2298.6,1054.2 2303.2,1119.9 2307.8,1120.8 2312.5,1009.2 2317.1,1010.2 2321.8,1123.0 2326.4,1121.8 2331.1,1038.6 2335.7,1038.6 2340.3,1118.5 2345.0,1119.7 2349.6,1035.6 2354.3,1034.5 2358.9,1112.2 2363.6,1108.3 2368.2,1038.0 2372.8,1041.2 2377.5,1119.7 2382.1,1119.7 2386.8,1064.5 2391.4,1063.5 2396.1,1120.5 2400.7,1120.5 2405.3,1049.4 2410.0,1052.0 2414.6,1120.5 2419.3,1119.7 2423.9,1025.4 2428.6,1026.8 2433.2,1119.7 2437.8,1119.7 2442.5,1047.3 2447.1,1048.8 2451.8,1121.4 2456.4,1120.5 2461.0,1027.5 2465.7,1028.8 2470.3,1121.4 2475.0,1120.5 2479.6,991.7 2484.3,990.7 2488.9,1118.5 2493.5,1120.5 2498.2,1016.6 2502.8,1016.6 2507.5,1120.5 2512.1,1120.5 2516.8,1052.4 2521.4,1052.4 2526.0,1120.5 2530.7,1119.7 2535.3,1017.4 2540.0,1015.3 2544.6,1118.3 2549.3,1118.3 2553.9,1007.5 2558.5,1008.8 2563.2,1121.4 2567.8,1120.5 2572.5,1033.5 2577.1,1034.7 2581.8,1120.5 2586.4,1119.7 2591.0,1022.7 2595.7,1023.9 2600.3,1120.5 2605.0,1119.7 2609.6,1066.5 2614.2,1068.2 2618.9,1122.4 2623.5,1120.5 2628.2,1052.0 2632.8,1053.3 2637.5,1120.5 2642.1,1120.5 2646.7,1003.1 2651.4,1001.3 2656.0,1119.7 2660.7,1120.5 2665.3,1037.6 2670.0,1037.6 2674.6,1119.7 2679.2,1119.7 2683.9,1015.3 2688.5,1015.3 2693.2,1121.5 2697.8,1119.7 2702.5,1031.1 2707.1,1032.3 2711.7,1120.5 2716.4,1118.5 2721.0,952.2 2725.7,954.6 2730.3,1119.7 2735.0,1119.7 2739.6,1023.7 2744.2,1022.7 2748.9,1120.5 2753.5,1120.5 2758.2,1019.7 2762.8,1018.4 2767.5,1118.5 2772.1,1119.7 2776.7,1027.4 2781.4,1026.4 2786.0,1116.7 2790.7,1112.4 2795.3,1022.4 2799.9,1026.4 2804.6,1120.5 2809.2,1120.5 2813.9,1045.2 2818.5,1046.3 2823.2,1120.5 2827.8,1117.3 2832.4,1052.4 2837.1,1052.4 2841.7,1118.5 2846.4,1117.3 2851.0,1009.8 2855.7,1008.6 2860.3,1118.5" fill="none" stroke="#00acc1" stroke-width="4" stroke-linejoin="round"/></svg></svg>
<div class="sel" style="left:2027.5px;top:866.0px;width:373.9px;height:40.4px"></div>
<svg class="ic" style="left:2367.6px;top:882.7px" width="14" height="7" viewBox="0 0 14 7"><path d="M0,0H14L7,7Z" fill="#212121"/></svg>
<svg class="ic" style="left:2634.9px;top:869.5px" width="32.5" height="32.5" viewBox="0 0 24 24" ><path fill="#757575" d="M11,9H13V7H11M12,20C7.59,20 4,16.41 4,12C4,7.59 7.59,4 12,4C16.41,4 20,7.59 20,12C20,16.41 16.41,20 12,20M12,2A10,10 0 0,0 2,12A10,10 0 0,0 12,22A10,10 0 0,0 22,12A10,10 0 0,0 12,2M11,17H13V11H11V17Z"/></svg>
<i class="lm" style="left:1738.5px;top:1211.6px;background:#00acc1"></i>
<span class="t" style="left:1714.7px;top:1111.1px;font-size:24px;color:#212121">0m</span>
<span class="t" style="left:1714.7px;top:1048.8px;font-size:24px;color:#212121">5m</span>
<span class="t" style="left:1701.3px;top:986.6px;font-size:24px;color:#212121">10m</span>
<span class="t" style="left:1701.3px;top:924.4px;font-size:24px;color:#212121">15m</span>
<span class="t" style="left:1930.7px;top:1153.1px;font-size:24px;color:#212121">Jul 31</span>
<span class="t" style="left:2118.4px;top:1153.1px;font-size:24px;color:#212121">16:10</span>
<span class="t" style="left:2304.1px;top:1153.1px;font-size:24px;color:#212121">16:20</span>
<span class="t" style="left:2489.8px;top:1153.1px;font-size:24px;color:#212121">16:30</span>
<span class="t" style="left:2675.5px;top:1153.1px;font-size:24px;color:#212121">16:40</span>
<span class="t" style="left:1890.8px;top:867.2px;font-size:28px;color:#212121;letter-spacing:-0.54px">CPU delay</span>
<span class="t" style="left:2040.1px;top:868.8px;font-size:29px;color:#212121;letter-spacing:-0.44px">container: coroot-coro…</span>
<span class="t" style="left:2400.8px;top:867.2px;font-size:28px;color:#212121;letter-spacing:0.55px">, seconds/second</span>
<span class="t" style="left:1761.4px;top:1210.2px;font-size:24px;color:#212121;letter-spacing:0.21px">coroot-coroot-1@orbstack</span>
</figure>
<figure>
<svg class="plot" style="left:516px;top:1381px" width="1102" height="230" viewBox="0 0 1102 230"><g stroke="#000" stroke-opacity=".07" stroke-width="4"><line x1="0" x2="1102" y1="204.0" y2="204.0"/><line x1="0" x2="1102" y1="164.0" y2="164.0"/><line x1="0" x2="1102" y1="124.1" y2="124.1"/><line x1="0" x2="1102" y1="84.1" y2="84.1"/><line x1="0" x2="1102" y1="44.2" y2="44.2"/><line x1="0" x2="1102" y1="4.2" y2="4.2"/><line x1="204.7" x2="204.7" y1="4" y2="224"/><line x1="390.4" x2="390.4" y1="4" y2="224"/><line x1="576.1" x2="576.1" y1="4" y2="224"/><line x1="761.8" x2="761.8" y1="4" y2="224"/><line x1="947.5" x2="947.5" y1="4" y2="224"/></g><svg x="20" y="0" width="1082" height="230" viewBox="536 1381 1082 230"><polyline points="536,1585 1618,1585" fill="none" stroke="#00acc1" stroke-width="4" stroke-linejoin="round"/></svg></svg>
<div class="sel" style="left:810.4px;top:1325.0px;width:373.7px;height:40.0px"></div>
<svg class="ic" style="left:1150.1px;top:1341.5px" width="14" height="7" viewBox="0 0 14 7"><path d="M0,0H14L7,7Z" fill="#212121"/></svg>
<svg class="ic" style="left:1418.2px;top:1328.0px" width="32.5" height="32.5" viewBox="0 0 24 24" ><path fill="#757575" d="M11,9H13V7H11M12,20C7.59,20 4,16.41 4,12C4,7.59 7.59,4 12,4C16.41,4 20,7.59 20,12C20,16.41 16.41,20 12,20M12,2A10,10 0 0,0 2,12A10,10 0 0,0 12,22A10,10 0 0,0 22,12A10,10 0 0,0 12,2M11,17H13V11H11V17Z"/></svg>
<i class="lm" style="left:496.0px;top:1670.6px;background:#00acc1"></i>
<span class="t" style="left:492.6px;top:1570.1px;font-size:24px;color:#212121">0</span>
<span class="t" style="left:479.3px;top:1530.1px;font-size:24px;color:#212121">20</span>
<span class="t" style="left:479.3px;top:1490.2px;font-size:24px;color:#212121">40</span>
<span class="t" style="left:479.3px;top:1450.2px;font-size:24px;color:#212121">60</span>
<span class="t" style="left:479.3px;top:1410.3px;font-size:24px;color:#212121">80</span>
<span class="t" style="left:466.0px;top:1370.3px;font-size:24px;color:#212121">100</span>
<span class="t" style="left:688.7px;top:1612.1px;font-size:24px;color:#212121">Jul 31</span>
<span class="t" style="left:876.4px;top:1612.1px;font-size:24px;color:#212121">16:10</span>
<span class="t" style="left:1062.1px;top:1612.1px;font-size:24px;color:#212121">16:20</span>
<span class="t" style="left:1247.8px;top:1612.1px;font-size:24px;color:#212121">16:30</span>
<span class="t" style="left:1433.5px;top:1612.1px;font-size:24px;color:#212121">16:40</span>
<span class="t" style="left:624.0px;top:1325.6px;font-size:28px;color:#212121;letter-spacing:0.63px">Throttled time</span>
<span class="t" style="left:823.9px;top:1327.6px;font-size:29px;color:#212121;letter-spacing:-0.46px">container: coroot-coro…</span>
<span class="t" style="left:1183.6px;top:1325.6px;font-size:28px;color:#212121;letter-spacing:0.54px">, seconds/second</span>
<span class="t" style="left:519.0px;top:1669.2px;font-size:24px;color:#212121;letter-spacing:0.21px">coroot-coroot-1@orbstack</span>
</figure>
<figure>
<svg class="plot" style="left:1758px;top:1381px" width="1102" height="230" viewBox="0 0 1102 230"><g stroke="#000" stroke-opacity=".07" stroke-width="4"><line x1="0" x2="1102" y1="204.0" y2="204.0"/><line x1="0" x2="1102" y1="150.0" y2="150.0"/><line x1="0" x2="1102" y1="96.0" y2="96.0"/><line x1="0" x2="1102" y1="42.0" y2="42.0"/><line x1="204.7" x2="204.7" y1="4" y2="224"/><line x1="390.4" x2="390.4" y1="4" y2="224"/><line x1="576.1" x2="576.1" y1="4" y2="224"/><line x1="761.8" x2="761.8" y1="4" y2="224"/><line x1="947.5" x2="947.5" y1="4" y2="224"/></g><svg x="20" y="0" width="1082" height="230" viewBox="1778 1381 1082 230"><polyline points="1778.6,1435.5 1783.2,1490.3 1787.9,1495.5 1792.5,1427.4 1797.2,1425.3 1801.8,1491.4 1806.5,1474.7 1811.1,1420.4 1815.7,1433.6 1820.4,1483.4 1825.0,1489.4 1829.7,1435.5 1834.3,1426.6 1839.0,1477.0 1843.6,1487.5 1848.2,1431.7 1852.9,1428.7 1857.5,1493.7 1862.2,1495.5 1866.8,1436.8 1871.4,1430.4 1876.1,1487.1 1880.7,1487.1 1885.4,1434.3 1890.0,1433.3 1894.7,1483.4 1899.3,1483.4 1903.9,1407.9 1908.6,1403.5 1913.2,1481.4 1917.9,1481.4 1922.5,1430.4 1927.2,1438.7 1931.8,1485.6 1936.4,1476.0 1941.1,1424.3 1945.7,1427.6 1950.4,1489.7 1955.0,1499.5 1959.7,1437.4 1964.3,1434.5 1968.9,1493.7 1973.6,1486.9 1978.2,1427.4 1982.9,1429.8 1987.5,1487.5 1992.2,1484.3 1996.8,1428.5 2001.4,1435.8 2006.1,1481.4 2010.7,1484.3 2015.4,1424.3 2020.0,1420.4 2024.7,1492.7 2029.3,1487.5 2033.9,1441.3 2038.6,1441.3 2043.2,1485.6 2047.9,1496.5 2052.5,1441.3 2057.2,1439.4 2061.8,1493.7 2066.4,1494.5 2071.1,1424.3 2075.7,1422.3 2080.4,1486.9 2085.0,1489.7 2089.6,1444.2 2094.3,1441.3 2098.9,1489.4 2103.6,1484.1 2108.2,1422.0 2112.9,1430.4 2117.5,1486.6 2122.1,1482.4 2126.8,1411.1 2131.4,1415.7 2136.1,1485.3 2140.7,1481.1 2145.4,1441.3 2150.0,1447.7 2154.6,1490.4 2159.3,1487.5 2163.9,1413.7 2168.6,1405.0 2173.2,1469.9 2177.9,1476.3 2182.5,1431.4 2187.1,1436.6 2191.8,1494.5 2196.4,1489.7 2201.1,1435.5 2205.7,1422.3 2210.4,1474.7 2215.0,1486.6 2219.6,1427.2 2224.3,1426.1 2228.9,1494.5 2233.6,1496.5 2238.2,1423.0 2242.8,1428.7 2247.5,1502.7 2252.1,1497.8 2256.8,1446.8 2261.4,1446.8 2266.1,1494.5 2270.7,1487.5 2275.3,1437.4 2280.0,1445.2 2284.6,1497.8 2289.3,1494.0 2293.9,1443.2 2298.6,1447.3 2303.2,1487.5 2307.8,1487.5 2312.5,1438.1 2317.1,1434.3 2321.8,1490.4 2326.4,1493.7 2331.1,1447.7 2335.7,1434.3 2340.3,1483.7 2345.0,1500.7 2349.6,1445.2 2354.3,1445.2 2358.9,1496.5 2363.6,1487.1 2368.2,1429.1 2372.8,1439.4 2377.5,1487.1 2382.1,1487.1 2386.8,1443.5 2391.4,1443.5 2396.1,1495.2 2400.7,1499.5 2405.3,1431.1 2410.0,1432.3 2414.6,1498.4 2419.3,1490.4 2423.9,1427.0 2428.6,1435.5 2433.2,1490.7 2437.8,1476.6 2442.5,1428.1 2447.1,1436.6 2451.8,1491.4 2456.4,1498.7 2461.0,1438.1 2465.7,1437.1 2470.3,1491.6 2475.0,1483.7 2479.6,1416.0 2484.3,1421.2 2488.9,1491.4 2493.5,1493.3 2498.2,1432.3 2502.8,1419.2 2507.5,1481.1 2512.1,1493.7 2516.8,1445.2 2521.4,1448.1 2526.0,1501.6 2530.7,1495.2 2535.3,1435.5 2540.0,1435.5 2544.6,1490.7 2549.3,1493.7 2553.9,1442.6 2558.5,1433.3 2563.2,1490.4 2567.8,1490.4 2572.5,1422.3 2577.1,1432.7 2581.8,1499.5 2586.4,1490.4 2591.0,1434.3 2595.7,1442.6 2600.3,1486.6 2605.0,1479.8 2609.6,1443.9 2614.2,1443.9 2618.9,1492.0 2623.5,1495.5 2628.2,1428.1 2632.8,1429.4 2637.5,1486.6 2642.1,1487.5 2646.7,1434.6 2651.4,1434.6 2656.0,1486.6 2660.7,1486.6 2665.3,1440.0 2670.0,1424.0 2674.6,1476.0 2679.2,1490.4 2683.9,1433.0 2688.5,1436.6 2693.2,1494.5 2697.8,1492.3 2702.5,1431.1 2707.1,1432.3 2711.7,1480.4 2716.4,1480.4 2721.0,1421.2 2725.7,1418.9 2730.3,1491.4 2735.0,1485.6 2739.6,1428.1 2744.2,1438.5 2748.9,1495.8 2753.5,1488.2 2758.2,1429.1 2762.8,1432.7 2767.5,1472.5 2772.1,1475.6 2776.7,1437.4 2781.4,1428.1 2786.0,1487.5 2790.7,1492.0 2795.3,1426.6 2799.9,1422.0 2804.6,1484.3 2809.2,1486.6 2813.9,1431.9 2818.5,1440.0 2823.2,1486.9 2827.8,1479.6 2832.4,1431.7 2837.1,1421.2 2841.7,1477.3 2846.4,1490.1 2851.0,1420.8 2855.7,1422.0 2860.3,1487.5" fill="none" stroke="#00acc1" stroke-width="4" stroke-linejoin="round"/></svg></svg>
<div class="sel" style="left:2265.7px;top:1324.6px;width:175.4px;height:40.5px"></div>
<svg class="ic" style="left:2407.5px;top:1341.3px" width="14" height="7" viewBox="0 0 14 7"><path d="M0,0H14L7,7Z" fill="#212121"/></svg>
<svg class="ic" style="left:2482.8px;top:1328.4px" width="32.5" height="32.5" viewBox="0 0 24 24" ><path fill="#757575" d="M11,9H13V7H11M12,20C7.59,20 4,16.41 4,12C4,7.59 7.59,4 12,4C16.41,4 20,7.59 20,12C20,16.41 16.41,20 12,20M12,2A10,10 0 0,0 2,12A10,10 0 0,0 12,22A10,10 0 0,0 22,12A10,10 0 0,0 12,2M11,17H13V11H11V17Z"/></svg>
<i class="lm" style="left:1738.5px;top:1670.6px;background:#00acc1"></i>
<span class="t" style="left:1734.6px;top:1570.1px;font-size:24px;color:#212121">0</span>
<span class="t" style="left:1734.6px;top:1516.1px;font-size:24px;color:#212121">1</span>
<span class="t" style="left:1734.6px;top:1462.1px;font-size:24px;color:#212121">2</span>
<span class="t" style="left:1734.6px;top:1408.1px;font-size:24px;color:#212121">3</span>
<span class="t" style="left:1930.7px;top:1612.1px;font-size:24px;color:#212121">Jul 31</span>
<span class="t" style="left:2118.4px;top:1612.1px;font-size:24px;color:#212121">16:10</span>
<span class="t" style="left:2304.1px;top:1612.1px;font-size:24px;color:#212121">16:20</span>
<span class="t" style="left:2489.8px;top:1612.1px;font-size:24px;color:#212121">16:30</span>
<span class="t" style="left:2675.5px;top:1612.1px;font-size:24px;color:#212121">16:40</span>
<span class="t" style="left:2043.3px;top:1325.8px;font-size:28px;color:#212121;letter-spacing:-0.24px">Node CPU usage</span>
<span class="t" style="left:2277.6px;top:1327.4px;font-size:29px;color:#212121;letter-spacing:-0.26px">overview</span>
<span class="t" style="left:2440.7px;top:1325.8px;font-size:28px;color:#212121">,</span>
<span class="t" style="left:2454.5px;top:1325.8px;font-size:28px;color:#212121">%</span>
<span class="t" style="left:1761.4px;top:1669.2px;font-size:24px;color:#212121;letter-spacing:0.50px">orbstack</span>
</figure>
<figure>
<svg class="plot" style="left:516px;top:1840px" width="1102" height="230" viewBox="0 0 1102 230"><g stroke="#000" stroke-opacity=".07" stroke-width="4"><line x1="0" x2="1102" y1="204.0" y2="204.0"/><line x1="0" x2="1102" y1="143.3" y2="143.3"/><line x1="0" x2="1102" y1="82.6" y2="82.6"/><line x1="0" x2="1102" y1="21.9" y2="21.9"/><line x1="204.7" x2="204.7" y1="4" y2="224"/><line x1="390.4" x2="390.4" y1="4" y2="224"/><line x1="576.1" x2="576.1" y1="4" y2="224"/><line x1="761.8" x2="761.8" y1="4" y2="224"/><line x1="947.5" x2="947.5" y1="4" y2="224"/></g><svg x="20" y="0" width="1082" height="230" viewBox="536 1840 1082 230"><polyline points="536.1,2043.5 540.7,2043.6 545.4,2043.5 550.0,2043.4 554.7,2043.5 559.3,2043.6 564.0,2043.6 568.6,2043.5 573.2,2043.5 577.9,2043.5 582.5,2043.5 587.2,2043.6 591.8,2043.6 596.5,2043.4 601.1,2043.5 605.7,2043.4 610.4,2043.4 615.0,2043.5 619.7,2043.5 624.3,2043.5 629.0,2043.6 633.6,2043.4 638.2,2043.5 642.9,2043.4 647.5,2043.6 652.2,2043.4 656.8,2043.4 661.4,2043.5 666.1,2043.5 670.7,2043.6 675.4,2043.4 680.0,2043.5 684.7,2043.5 689.3,2043.6 693.9,2043.6 698.6,2043.6 703.2,2043.4 707.9,2043.6 712.5,2043.4 717.2,2043.5 721.8,2043.5 726.4,2043.6 731.1,2043.5 735.7,2043.6 740.4,2043.5 745.0,2043.4 749.7,2043.6 754.3,2043.5 758.9,2043.6 763.6,2043.6 768.2,2043.6 772.9,2043.6 777.5,2043.4 782.2,2043.4 786.8,2043.4 791.4,2043.4 796.1,2043.4 800.7,2043.6 805.4,2043.5 810.0,2043.5 814.7,2043.5 819.3,2043.4 823.9,2043.5 828.6,2043.4 833.2,2043.6 837.9,2043.5 842.5,2043.5 847.1,2043.5 851.8,2043.5 856.4,2043.4 861.1,2043.6 865.7,2043.4 870.4,2043.5 875.0,2043.5 879.6,2043.4 884.3,2043.5 888.9,2043.6 893.6,2043.6 898.2,2043.6 902.9,2043.5 907.5,2043.4 912.1,2043.4 916.8,2043.5 921.4,2043.5 926.1,2043.4 930.7,2043.6 935.4,2043.5 940.0,2043.6 944.6,2043.6 949.3,2043.5 953.9,2043.5 958.6,2043.5 963.2,2043.5 967.9,2043.4 972.5,2043.5 977.1,2043.6 981.8,2043.6 986.4,2043.4 991.1,2043.4 995.7,2043.4 1000.4,2043.5 1005.0,2043.6 1009.6,2043.6 1014.3,2043.6 1018.9,2043.6 1023.6,2043.4 1028.2,2043.4 1032.8,2043.4 1037.5,2043.6 1042.1,2043.6 1046.8,2043.6 1051.4,2043.4 1056.1,2043.6 1060.7,2043.4 1065.3,2043.5 1070.0,2043.5 1074.6,2043.4 1079.3,2043.6 1083.9,2043.5 1088.6,2043.6 1093.2,2043.6 1097.8,2043.6 1102.5,2043.6 1107.1,2043.6 1111.8,2043.6 1116.4,2043.4 1121.1,2043.6 1125.7,2043.4 1130.3,2043.5 1135.0,2043.5 1139.6,2043.5 1144.3,2043.4 1148.9,2043.4 1153.6,2043.5 1158.2,2043.5 1162.8,2043.5 1167.5,2043.5 1172.1,2043.5 1176.8,2043.5 1181.4,2043.6 1186.1,2043.4 1190.7,2043.5 1195.3,2043.6 1200.0,2043.6 1204.6,2043.4 1209.3,2043.6 1213.9,2043.5 1218.5,2043.5 1223.2,2043.4 1227.8,2043.6 1232.5,2043.5 1237.1,2043.5 1241.8,2043.6 1246.4,2043.4 1251.0,2043.6 1255.7,2043.4 1260.3,2043.6 1265.0,2043.6 1269.6,2043.4 1274.3,2043.4 1278.9,2043.6 1283.5,2043.5 1288.2,2043.5 1292.8,2043.5 1297.5,2043.6 1302.1,2043.4 1306.8,2043.4 1311.4,2043.5 1316.0,2043.4 1320.7,2043.4 1325.3,2043.5 1330.0,2043.4 1334.6,2043.4 1339.3,2043.5 1343.9,2043.6 1348.5,2043.5 1353.2,2043.4 1357.8,2043.6 1362.5,2043.5 1367.1,2043.4 1371.8,2043.5 1376.4,2043.6 1381.0,2043.5 1385.7,2043.6 1390.3,2043.4 1395.0,2043.5 1399.6,2043.6 1404.2,2043.4 1408.9,2043.5 1413.5,2043.6 1418.2,2043.4 1422.8,2043.4 1427.5,2043.4 1432.1,2043.4 1436.7,2043.5 1441.4,2043.5 1446.0,2043.5 1450.7,2043.5 1455.3,2043.4 1460.0,2043.6 1464.6,2043.6 1469.2,2043.5 1473.9,2043.5 1478.5,2043.5 1483.2,2043.5 1487.8,2043.6 1492.5,2043.6 1497.1,2043.6 1501.7,2043.4 1506.4,2043.4 1511.0,2043.5 1515.7,2043.6 1520.3,2043.4 1525.0,2043.4 1529.6,2043.5 1534.2,2043.6 1538.9,2043.4 1543.5,2043.5 1548.2,2043.5 1552.8,2043.6 1557.5,2043.5 1562.1,2043.6 1566.7,2043.5 1571.4,2043.6 1576.0,2043.5 1580.7,2043.4 1585.3,2043.5 1589.9,2043.4 1594.6,2043.6 1599.2,2043.5 1603.9,2043.5 1608.5,2043.6 1613.2,2043.5 1617.8,2043.4" fill="none" stroke="#c0ca33" stroke-width="2.4" stroke-linejoin="round"/><polyline points="536.1,2042.9 540.7,2043.0 545.4,2043.0 550.0,2042.9 554.7,2042.9 559.3,2043.0 564.0,2042.9 568.6,2042.8 573.2,2042.8 577.9,2043.0 582.5,2043.0 587.2,2042.9 591.8,2042.9 596.5,2043.0 601.1,2043.0 605.7,2042.8 610.4,2042.8 615.0,2042.9 619.7,2042.9 624.3,2042.9 629.0,2042.9 633.6,2043.0 638.2,2042.9 642.9,2042.8 647.5,2042.8 652.2,2043.0 656.8,2043.0 661.4,2042.8 666.1,2042.8 670.7,2043.0 675.4,2043.0 680.0,2042.9 684.7,2042.8 689.3,2042.9 693.9,2043.0 698.6,2042.9 703.2,2042.8 707.9,2043.0 712.5,2042.9 717.2,2042.8 721.8,2042.8 726.4,2043.0 731.1,2043.0 735.7,2042.8 740.4,2042.9 745.0,2043.0 749.7,2042.9 754.3,2042.9 758.9,2042.9 763.6,2043.0 768.2,2043.0 772.9,2042.8 777.5,2042.8 782.2,2043.0 786.8,2042.9 791.4,2042.9 796.1,2042.8 800.7,2043.0 805.4,2043.0 810.0,2042.9 814.7,2042.8 819.3,2042.9 823.9,2043.0 828.6,2042.8 833.2,2042.8 837.9,2043.0 842.5,2043.0 847.1,2042.9 851.8,2042.8 856.4,2043.0 861.1,2043.0 865.7,2042.9 870.4,2042.9 875.0,2043.0 879.6,2043.0 884.3,2042.8 888.9,2042.8 893.6,2042.9 898.2,2042.9 902.9,2042.8 907.5,2042.9 912.1,2043.0 916.8,2042.9 921.4,2042.8 926.1,2042.8 930.7,2042.9 935.4,2043.0 940.0,2042.8 944.6,2042.9 949.3,2043.0 953.9,2043.0 958.6,2042.9 963.2,2042.8 967.9,2042.9 972.5,2043.0 977.1,2042.9 981.8,2042.9 986.4,2043.0 991.1,2042.9 995.7,2042.8 1000.4,2042.9 1005.0,2043.0 1009.6,2042.9 1014.3,2042.8 1018.9,2042.9 1023.6,2043.0 1028.2,2043.0 1032.8,2042.9 1037.5,2042.8 1042.1,2043.0 1046.8,2043.0 1051.4,2042.8 1056.1,2042.9 1060.7,2042.9 1065.3,2043.0 1070.0,2042.8 1074.6,2042.8 1079.3,2043.0 1083.9,2042.9 1088.6,2042.8 1093.2,2042.9 1097.8,2043.0 1102.5,2043.0 1107.1,2042.8 1111.8,2042.9 1116.4,2042.9 1121.1,2042.9 1125.7,2042.8 1130.3,2042.9 1135.0,2043.0 1139.6,2043.0 1144.3,2042.9 1148.9,2042.9 1153.6,2042.9 1158.2,2043.0 1162.8,2042.9 1167.5,2042.8 1172.1,2043.0 1176.8,2042.9 1181.4,2042.8 1186.1,2042.8 1190.7,2043.0 1195.3,2042.9 1200.0,2042.8 1204.6,2042.8 1209.3,2043.0 1213.9,2043.0 1218.5,2042.8 1223.2,2042.8 1227.8,2042.9 1232.5,2043.0 1237.1,2042.8 1241.8,2042.8 1246.4,2043.0 1251.0,2042.9 1255.7,2042.8 1260.3,2042.8 1265.0,2043.0 1269.6,2043.0 1274.3,2042.8 1278.9,2042.8 1283.5,2043.0 1288.2,2042.9 1292.8,2042.8 1297.5,2042.8 1302.1,2043.0 1306.8,2042.9 1311.4,2042.9 1316.0,2042.8 1320.7,2043.0 1325.3,2043.0 1330.0,2042.9 1334.6,2042.8 1339.3,2043.0 1343.9,2042.9 1348.5,2042.8 1353.2,2042.9 1357.8,2043.0 1362.5,2042.9 1367.1,2042.9 1371.8,2042.8 1376.4,2043.0 1381.0,2042.9 1385.7,2042.8 1390.3,2042.8 1395.0,2043.0 1399.6,2042.9 1404.2,2042.9 1408.9,2042.8 1413.5,2043.0 1418.2,2042.9 1422.8,2042.8 1427.5,2042.8 1432.1,2043.0 1436.7,2043.0 1441.4,2042.9 1446.0,2042.8 1450.7,2043.0 1455.3,2042.9 1460.0,2042.8 1464.6,2042.9 1469.2,2043.0 1473.9,2042.9 1478.5,2042.8 1483.2,2042.9 1487.8,2042.9 1492.5,2042.9 1497.1,2042.9 1501.7,2042.8 1506.4,2043.0 1511.0,2042.9 1515.7,2042.9 1520.3,2042.9 1525.0,2043.0 1529.6,2042.9 1534.2,2042.9 1538.9,2042.9 1543.5,2043.0 1548.2,2042.9 1552.8,2042.8 1557.5,2042.8 1562.1,2042.9 1566.7,2042.9 1571.4,2042.9 1576.0,2042.8 1580.7,2043.0 1585.3,2043.0 1589.9,2042.8 1594.6,2042.8 1599.2,2042.9 1603.9,2043.0 1608.5,2042.8 1613.2,2042.9 1617.8,2043.0" fill="none" stroke="#fb8c00" stroke-width="3" stroke-linejoin="round"/><polyline points="536.1,2040.2 540.7,2041.4 545.4,2041.3 550.0,2040.2 554.7,2040.3 559.3,2041.3 564.0,2041.0 568.6,2039.8 573.2,2039.8 577.9,2041.4 582.5,2041.2 587.2,2040.1 591.8,2040.2 596.5,2041.4 601.1,2041.4 605.7,2039.7 610.4,2039.8 615.0,2041.0 619.7,2041.0 624.3,2040.2 629.0,2040.1 633.6,2041.1 638.2,2041.1 642.9,2039.8 647.5,2039.8 652.2,2041.5 656.8,2041.1 661.4,2039.9 666.1,2040.0 670.7,2041.4 675.4,2041.2 680.0,2040.2 684.7,2039.7 689.3,2041.0 693.9,2041.2 698.6,2040.1 703.2,2039.7 707.9,2041.2 712.5,2041.0 717.2,2039.8 721.8,2040.0 726.4,2041.3 731.1,2041.1 735.7,2040.0 740.4,2040.2 745.0,2041.3 749.7,2041.0 754.3,2040.3 758.9,2040.3 763.6,2041.1 768.2,2041.3 772.9,2040.0 777.5,2040.0 782.2,2041.3 786.8,2040.9 791.4,2040.2 796.1,2040.0 800.7,2041.4 805.4,2041.1 810.0,2040.1 814.7,2040.1 819.3,2041.1 823.9,2041.3 828.6,2040.0 833.2,2039.7 837.9,2041.5 842.5,2041.5 847.1,2040.2 851.8,2039.8 856.4,2041.1 861.1,2041.4 865.7,2040.1 870.4,2040.2 875.0,2041.2 879.6,2041.5 884.3,2039.9 888.9,2039.8 893.6,2040.9 898.2,2041.1 902.9,2039.7 907.5,2040.3 912.1,2041.3 916.8,2040.9 921.4,2039.8 926.1,2040.0 930.7,2040.9 935.4,2041.1 940.0,2039.8 944.6,2040.1 949.3,2041.4 953.9,2041.2 958.6,2040.2 963.2,2040.1 967.9,2040.9 972.5,2041.3 977.1,2040.3 981.8,2040.3 986.4,2041.4 991.1,2041.0 995.7,2040.1 1000.4,2040.1 1005.0,2041.5 1009.6,2040.9 1014.3,2040.0 1018.9,2040.2 1023.6,2041.5 1028.2,2041.5 1032.8,2040.2 1037.5,2039.9 1042.1,2041.4 1046.8,2041.5 1051.4,2040.0 1056.1,2040.1 1060.7,2040.9 1065.3,2041.4 1070.0,2040.0 1074.6,2039.8 1079.3,2041.3 1083.9,2040.9 1088.6,2040.0 1093.2,2040.2 1097.8,2041.3 1102.5,2041.5 1107.1,2040.0 1111.8,2040.1 1116.4,2041.0 1121.1,2041.0 1125.7,2040.0 1130.3,2040.3 1135.0,2041.4 1139.6,2041.4 1144.3,2040.2 1148.9,2040.2 1153.6,2041.0 1158.2,2041.4 1162.8,2040.3 1167.5,2039.7 1172.1,2041.2 1176.8,2040.9 1181.4,2040.1 1186.1,2039.8 1190.7,2041.1 1195.3,2041.0 1200.0,2039.8 1204.6,2040.0 1209.3,2041.5 1213.9,2041.4 1218.5,2039.8 1223.2,2039.8 1227.8,2041.0 1232.5,2041.3 1237.1,2039.9 1241.8,2039.8 1246.4,2041.1 1251.0,2041.0 1255.7,2040.0 1260.3,2039.9 1265.0,2041.1 1269.6,2041.3 1274.3,2039.7 1278.9,2039.7 1283.5,2041.5 1288.2,2040.9 1292.8,2039.7 1297.5,2039.9 1302.1,2041.5 1306.8,2041.0 1311.4,2040.2 1316.0,2039.7 1320.7,2041.1 1325.3,2041.5 1330.0,2040.2 1334.6,2039.9 1339.3,2041.2 1343.9,2041.1 1348.5,2039.7 1353.2,2040.2 1357.8,2041.5 1362.5,2041.0 1367.1,2040.3 1371.8,2039.8 1376.4,2041.4 1381.0,2041.0 1385.7,2039.8 1390.3,2039.8 1395.0,2041.2 1399.6,2041.0 1404.2,2040.2 1408.9,2039.9 1413.5,2041.3 1418.2,2041.0 1422.8,2039.8 1427.5,2040.0 1432.1,2041.2 1436.7,2041.5 1441.4,2040.3 1446.0,2039.9 1450.7,2041.2 1455.3,2041.0 1460.0,2039.9 1464.6,2040.2 1469.2,2041.3 1473.9,2041.0 1478.5,2040.0 1483.2,2040.3 1487.8,2041.0 1492.5,2041.0 1497.1,2040.2 1501.7,2040.0 1506.4,2041.3 1511.0,2041.0 1515.7,2040.1 1520.3,2040.2 1525.0,2041.2 1529.6,2040.9 1534.2,2040.2 1538.9,2040.2 1543.5,2041.1 1548.2,2041.0 1552.8,2040.0 1557.5,2040.0 1562.1,2041.0 1566.7,2041.0 1571.4,2040.3 1576.0,2039.8 1580.7,2041.4 1585.3,2041.3 1589.9,2039.8 1594.6,2040.0 1599.2,2041.0 1603.9,2041.4 1608.5,2039.8 1613.2,2040.2 1617.8,2041.4" fill="none" stroke="#00acc1" stroke-width="4" stroke-linejoin="round"/><polyline points="536,1861.9 1618,1861.9" fill="none" stroke="#000000" stroke-width="4" stroke-linejoin="round"/></svg></svg>
<div class="sel" style="left:1013.7px;top:1783.7px;width:174.6px;height:40.5px"></div>
<svg class="ic" style="left:1154.7px;top:1800.5px" width="14" height="7" viewBox="0 0 14 7"><path d="M0,0H14L7,7Z" fill="#212121"/></svg>
<svg class="ic" style="left:1279.5px;top:1787.5px" width="32.5" height="32.5" viewBox="0 0 24 24" ><path fill="#757575" d="M11,9H13V7H11M12,20C7.59,20 4,16.41 4,12C4,7.59 7.59,4 12,4C16.41,4 20,7.59 20,12C20,16.41 16.41,20 12,20M12,2A10,10 0 0,0 2,12A10,10 0 0,0 12,22A10,10 0 0,0 22,12A10,10 0 0,0 12,2M11,17H13V11H11V17Z"/></svg>
<i class="lm" style="left:496.0px;top:2130.0px;background:#00acc1"></i>
<i class="lm" style="left:749.8px;top:2130.0px;background:#fb8c00"></i>
<i class="lm" style="left:1010.6px;top:2130.0px;background:#8e24aa"></i>
<i class="lm" style="left:1253.0px;top:2130.0px;background:#c0ca33"></i>
<i class="lm" style="left:1462.0px;top:2130.0px;background:#9e9e9e"></i>
<i class="lm" style="left:496.0px;top:2165.8px;background:#000000"></i>
<span class="t" style="left:492.6px;top:2029.1px;font-size:24px;color:#212121">0</span>
<span class="t" style="left:492.6px;top:1968.4px;font-size:24px;color:#212121">2</span>
<span class="t" style="left:492.6px;top:1907.7px;font-size:24px;color:#212121">4</span>
<span class="t" style="left:492.6px;top:1847.0px;font-size:24px;color:#212121">6</span>
<span class="t" style="left:688.7px;top:2071.1px;font-size:24px;color:#212121">Jul 31</span>
<span class="t" style="left:876.4px;top:2071.1px;font-size:24px;color:#212121">16:10</span>
<span class="t" style="left:1062.1px;top:2071.1px;font-size:24px;color:#212121">16:20</span>
<span class="t" style="left:1247.8px;top:2071.1px;font-size:24px;color:#212121">16:30</span>
<span class="t" style="left:1433.5px;top:2071.1px;font-size:24px;color:#212121">16:40</span>
<span class="t" style="left:762.4px;top:1785.2px;font-size:28px;color:#212121">CPU consumers on</span>
<span class="t" style="left:1025.8px;top:1786.5px;font-size:29px;color:#212121;letter-spacing:0.33px">orbstack</span>
<span class="t" style="left:1187.7px;top:1785.2px;font-size:28px;color:#212121;letter-spacing:-0.04px">, cores</span>
<span class="t" style="left:519.9px;top:2128.6px;font-size:24px;color:#212121;letter-spacing:0.05px">coroot-clickhouse-1</span>
<span class="t" style="left:774.3px;top:2128.6px;font-size:24px;color:#212121;letter-spacing:-0.12px">coroot-node-agent-1</span>
<span class="t" style="left:1034.4px;top:2128.6px;font-size:24px;color:#212121;letter-spacing:0.21px">coroot-greptimedb</span>
<span class="t" style="left:1276.9px;top:2128.6px;font-size:24px;color:#212121;letter-spacing:0.10px">coroot-coroot-1</span>
<span class="t" style="left:1485.8px;top:2128.6px;font-size:24px;color:#212121;letter-spacing:0.40px">other</span>
<span class="t" style="left:519.9px;top:2164.4px;font-size:24px;color:#212121;letter-spacing:0.73px">total</span>
</figure>
</section>
</main>
</div>
</body></html>
